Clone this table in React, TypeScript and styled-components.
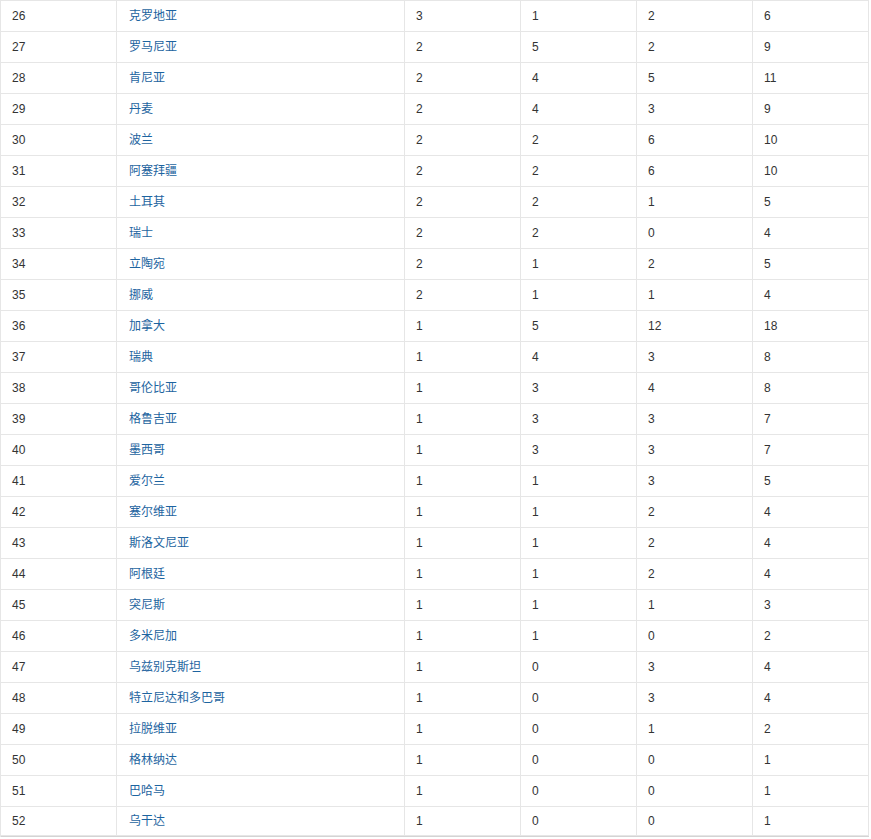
import React from 'react';
import styled, { createGlobalStyle } from 'styled-components';

type MedalRow = [number, string, number, number, number, number];

const ROWS: MedalRow[] = [
    [26, '克罗地亚', 3, 1, 2, 6],
    [27, '罗马尼亚', 2, 5, 2, 9],
    [28, '肯尼亚', 2, 4, 5, 11],
    [29, '丹麦', 2, 4, 3, 9],
    [30, '波兰', 2, 2, 6, 10],
    [31, '阿塞拜疆', 2, 2, 6, 10],
    [32, '土耳其', 2, 2, 1, 5],
    [33, '瑞士', 2, 2, 0, 4],
    [34, '立陶宛', 2, 1, 2, 5],
    [35, '挪威', 2, 1, 1, 4],
    [36, '加拿大', 1, 5, 12, 18],
    [37, '瑞典', 1, 4, 3, 8],
    [38, '哥伦比亚', 1, 3, 4, 8],
    [39, '格鲁吉亚', 1, 3, 3, 7],
    [40, '墨西哥', 1, 3, 3, 7],
    [41, '爱尔兰', 1, 1, 3, 5],
    [42, '塞尔维亚', 1, 1, 2, 4],
    [43, '斯洛文尼亚', 1, 1, 2, 4],
    [44, '阿根廷', 1, 1, 2, 4],
    [45, '突尼斯', 1, 1, 1, 3],
    [46, '多米尼加', 1, 1, 0, 2],
    [47, '乌兹别克斯坦', 1, 0, 3, 4],
    [48, '特立尼达和多巴哥', 1, 0, 3, 4],
    [49, '拉脱维亚', 1, 0, 1, 2],
    [50, '格林纳达', 1, 0, 0, 1],
    [51, '巴哈马', 1, 0, 0, 1],
    [52, '乌干达', 1, 0, 0, 1],
];

const GlobalStyle = createGlobalStyle`
    body {
        margin: 0;
        background: #ffffff;
        font-family: 'Liberation Sans', 'Noto Sans CJK SC', sans-serif;
    }
`;

const App: React.FC = () => {
    return (
        <>
            <GlobalStyle />
            <Table>
                {ROWS.map(([rank, country, gold, silver, bronze, total], index) => (
                    <Row key={rank} isLast={index === ROWS.length - 1}>
                        <Cell>{rank}</Cell>
                        <Cell>
                            <CountryLink href="#">{country}</CountryLink>
                        </Cell>
                        <Cell>{gold}</Cell>
                        <Cell>{silver}</Cell>
                        <Cell>{bronze}</Cell>
                        <Cell>{total}</Cell>
                    </Row>
                ))}
            </Table>
        </>
    );
};

const Table = styled.div`
    width: 869px;
    border-top: 1px solid #e6e6e6;
    border-left: 1px solid #e6e6e6;
    box-sizing: border-box;
`;

const Row = styled.div<{ isLast?: boolean }>`
    display: grid;
    grid-template-columns: 116px 288px 116px 116px 116px 116px;
    height: ${(props) => (props.isLast ? 29 : 31)}px;
    ${(props) => (props.isLast ? 'border-bottom: 1px solid #d4d4d4;' : '')}
`;

const Cell = styled.div`
    display: flex;
    align-items: center;
    padding: 0 10px 0 11px;
    border-right: 1px solid #e6e6e6;
    border-bottom: 1px solid #e6e6e6;
    box-sizing: border-box;
    font-size: 12px;
    line-height: 14px;
    color: #333333;
    white-space: nowrap;
`;

const CountryLink = styled.a`
    display: block;
    font-size: 12px;
    line-height: 12px;
    color: #1d64a0;
    text-decoration: none;
    margin: 0 0 1px 1px;
`;

export default App;
